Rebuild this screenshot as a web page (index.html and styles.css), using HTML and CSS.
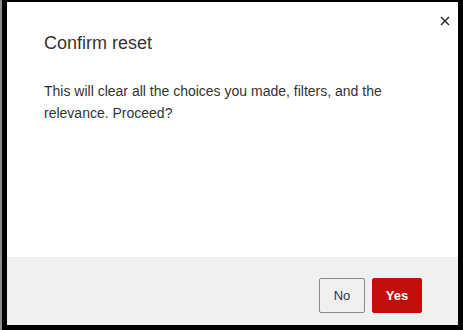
FILE: index.html
```html
<!DOCTYPE html>
<html>
<head>
<meta charset="utf-8">
<link rel="stylesheet" href="styles.css">
</head>
<body>
<div class="dialog">
  <div class="main">
    <button class="close" aria-label="Close">
      <svg width="10" height="10" viewBox="0 0 10 10"><path d="M1 1 L9 9 M9 1 L1 9" stroke="#222" stroke-width="1.4" fill="none"/></svg>
    </button>
    <h1 class="title">Confirm reset</h1>
    <p class="text">This will clear all the choices you made, filters, and the relevance. Proceed?</p>
  </div>
  <div class="footer">
    <button class="btn btn-no">No</button>
    <button class="btn btn-yes">Yes</button>
  </div>
</div>
</body>
</html>
```
FILE: styles.css
```css
html, body {
  margin: 0;
  height: 100%;
}
body {
  background: #000;
  box-sizing: border-box;
  border-left: 2px solid #8c8c8c;
  padding: 2px 5px 5px 5px;
  font-family: "Liberation Sans", Arial, sans-serif;
  color: #333;
}
.dialog {
  height: 323px;
  display: flex;
  flex-direction: column;
  background: #fff;
}
.main {
  position: relative;
  flex: 1;
  padding: 30px 37px 0 37px;
}
.close {
  position: absolute;
  top: 12px;
  right: 6px;
  width: 14px;
  height: 14px;
  padding: 0;
  border: 0;
  background: none;
  display: flex;
  align-items: center;
  justify-content: center;
}
.title {
  margin: 0;
  font-size: 18px;
  font-weight: normal;
  line-height: 22px;
  color: #333;
}
.text {
  margin: 26px 0 0 0;
  font-size: 14px;
  line-height: 22px;
  color: #333;
}
.footer {
  height: 68px;
  box-sizing: border-box;
  background: #f0f0f0;
  display: flex;
  justify-content: flex-end;
  align-items: flex-start;
  gap: 7px;
  padding: 21px 36px 0 0;
}
.btn {
  height: 35px;
  font-family: "Liberation Sans", Arial, sans-serif;
  font-size: 13px;
  border-radius: 2px;
  padding: 0;
}
.btn-no {
  width: 46px;
  background: #f0f0f0;
  border: 1px solid #8a8a8a;
  color: #333;
}
.btn-yes {
  width: 50px;
  background: #c30e0e;
  border: 1px solid #c30e0e;
  color: #fff;
  font-weight: bold;
}
```
